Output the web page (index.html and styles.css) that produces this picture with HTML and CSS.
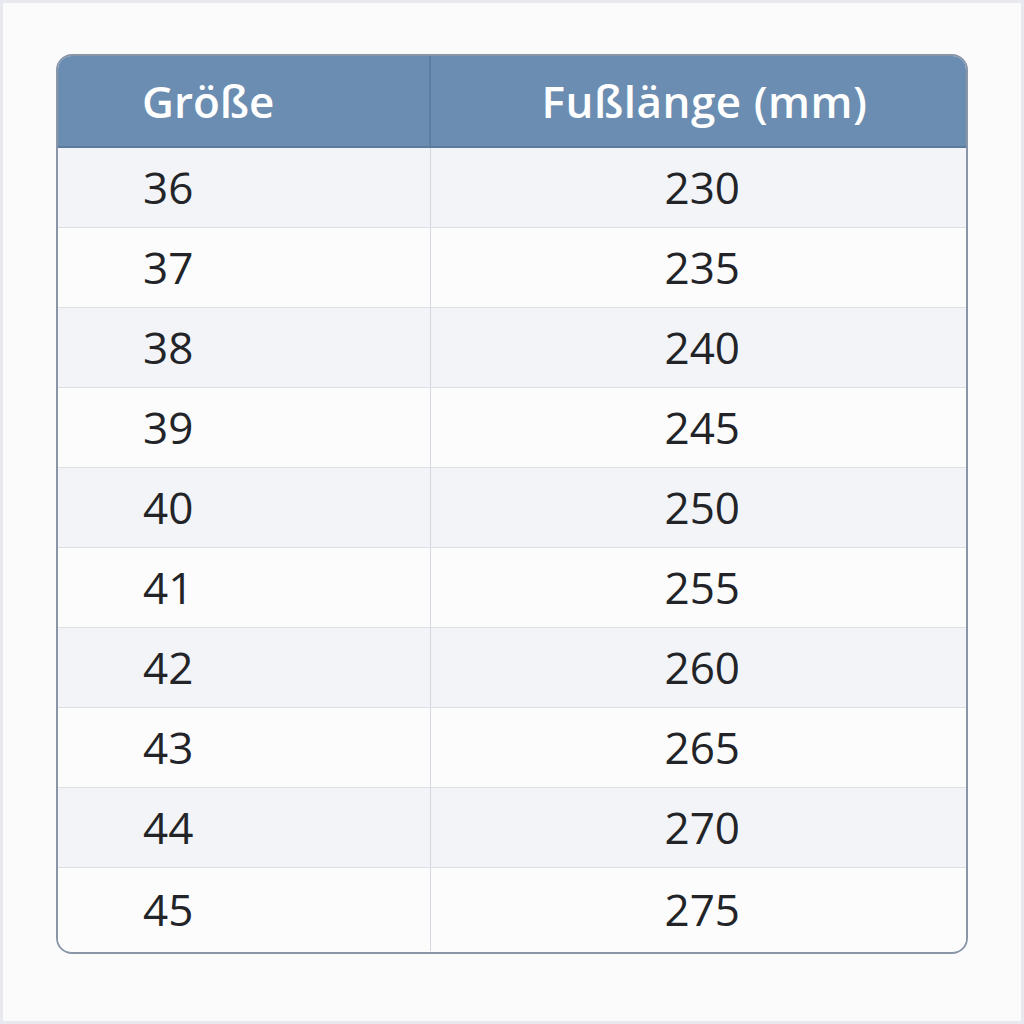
FILE: index.html
```html
<!DOCTYPE html>
<html lang="de">
<head>
<meta charset="utf-8">
<link rel="stylesheet" href="styles.css">
</head>
<body>
<div class="page">
  <div class="card">
    <table class="sizes">
      <colgroup><col class="col1"><col class="col2"></colgroup>
      <thead>
        <tr><th class="c1">Größe</th><th class="c2">Fußlänge (mm)</th></tr>
      </thead>
      <tbody>
        <tr><td class="c1">36</td><td class="c2">230</td></tr>
        <tr><td class="c1">37</td><td class="c2">235</td></tr>
        <tr><td class="c1">38</td><td class="c2">240</td></tr>
        <tr><td class="c1">39</td><td class="c2">245</td></tr>
        <tr><td class="c1">40</td><td class="c2">250</td></tr>
        <tr><td class="c1">41</td><td class="c2">255</td></tr>
        <tr><td class="c1">42</td><td class="c2">260</td></tr>
        <tr><td class="c1">43</td><td class="c2">265</td></tr>
        <tr><td class="c1">44</td><td class="c2">270</td></tr>
        <tr><td class="c1">45</td><td class="c2">275</td></tr>
      </tbody>
    </table>
  </div>
</div>
</body>
</html>
```
FILE: styles.css
```css
html, body {
  margin: 0;
  padding: 0;
}
body {
  font-family: "Open Sans", "Noto Sans", sans-serif;
}
.page {
  box-sizing: border-box;
  width: 1024px;
  height: 1024px;
  border: 3px solid #e8e9ee;
  background: #fbfbfc;
  padding: 51px 53px 0 53px;
}
.card {
  box-sizing: border-box;
  width: 912px;
  height: 900px;
  border: 2.5px solid #8a96a8;
  border-radius: 16px;
  overflow: hidden;
  background: #fcfcfd;
}
.sizes {
  width: 100%;
  border-collapse: collapse;
  table-layout: fixed;
}
.sizes .col1 { width: 372px; }
.sizes th, .sizes td { box-sizing: border-box; }
.sizes th {
  height: 91px;
  padding: 0;
  background: #6b8db1;
  color: #ffffff;
  font-weight: 600;
  font-size: 44px;
  border-bottom: 2px solid #5b7a9c;
}
.sizes th.c1 {
  text-align: left;
  padding-left: 84px;
  border-right: 2px solid #5d7ea2;
}
.sizes th.c2 {
  text-align: center;
  padding-left: 12px;
  letter-spacing: 0.5px;
}
.sizes td {
  height: 80px;
  padding: 0;
  font-size: 44px;
  color: #222428;
  border-bottom: 1.5px solid #dcdfe6;
}
.sizes tbody tr:last-child td { border-bottom: none; height: 84px; }
.sizes td.c1 {
  text-align: left;
  padding-left: 85px;
  border-right: 1.5px solid #d3d7df;
}
.sizes td.c2 {
  text-align: center;
  padding-left: 8px;
}
.sizes tbody tr:nth-child(odd) td { background: #f3f4f7; }
.sizes tbody tr:nth-child(even) td { background: #fcfcfd; }
```
